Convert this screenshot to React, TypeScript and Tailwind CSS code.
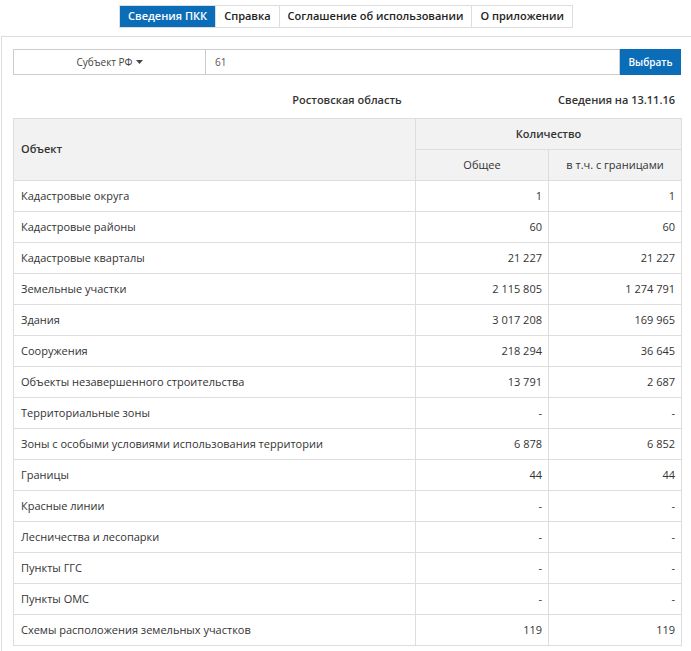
import React from "react"

const tabs = [
  { label: "Сведения ПКК", active: true },
  { label: "Справка" },
  { label: "Соглашение об использовании" },
  { label: "О приложении" },
]

const rows: [string, string, string][] = [
  ["Кадастровые округа", "1", "1"],
  ["Кадастровые районы", "60", "60"],
  ["Кадастровые кварталы", "21 227", "21 227"],
  ["Земельные участки", "2 115 805", "1 274 791"],
  ["Здания", "3 017 208", "169 965"],
  ["Сооружения", "218 294", "36 645"],
  ["Объекты незавершенного строительства", "13 791", "2 687"],
  ["Территориальные зоны", "-", "-"],
  ["Зоны с особыми условиями использования территории", "6 878", "6 852"],
  ["Границы", "44", "44"],
  ["Красные линии", "-", "-"],
  ["Лесничества и лесопарки", "-", "-"],
  ["Пункты ГГС", "-", "-"],
  ["Пункты ОМС", "-", "-"],
  ["Схемы расположения земельных участков", "119", "119"],
]

export default function App() {
  return (
    <div className="w-[691px] h-[651px] bg-white overflow-hidden text-[#333] text-[11px] font-['Open_Sans',sans-serif]">
      {/* Tabs */}
      <div className="flex justify-center pt-[5px] pl-[1px]">
        <div className="flex h-[23px] border border-[#ddd]">
          {tabs.map((t) => (
            <div
              key={t.label}
              className={
                t.active
                  ? "px-[8px] flex items-center bg-[#0b6db7] text-white font-semibold"
                  : "px-[8px] flex items-center border-l border-[#ddd] font-semibold text-[#222]"
              }
            >
              {t.label}
            </div>
          ))}
        </div>
      </div>

      {/* Panel */}
      <div className="mt-[8px] ml-[1px] border-t border-l border-[#ddd] pl-[11px] pr-[10px] pt-[12px] h-[620px]">
        <div className="flex h-[26px]">
          <div className="w-[193px] border border-[#ccc] flex items-center justify-center text-[10px] text-[#444]">
            Субъект РФ
            <svg width="7" height="4" viewBox="0 0 7 4" className="ml-[3px]">
              <path d="M0 0h7L3.5 4z" fill="#444" />
            </svg>
          </div>
          <div className="flex-1 border border-l-0 border-[#ccc] flex items-center pl-[9px] text-[10px] text-[#555]">
            61
          </div>
          <div className="w-[61px] bg-[#0b6db7] text-white flex items-center justify-center text-[10px] font-semibold">
            Выбрать
          </div>
        </div>

        <div className="grid grid-cols-[1fr_auto_1fr] h-[43px] items-center pt-[8px] font-semibold">
          <div />
          <div className="text-center">Ростовская область</div>
          <div className="text-right pr-[6px]">Сведения на 13.11.16</div>
        </div>

        <table className="w-[668px] border-collapse table-fixed">
          <colgroup>
            <col className="w-[402px]" />
            <col className="w-[133px]" />
            <col className="w-[133px]" />
          </colgroup>
          <thead>
            <tr className="h-[31px] bg-[#f2f2f2]">
              <th rowSpan={2} className="border border-[#ddd] text-left font-semibold px-[7px]">
                Объект
              </th>
              <th colSpan={2} className="border border-[#ddd] font-semibold">
                Количество
              </th>
            </tr>
            <tr className="h-[31px] bg-[#f2f2f2]">
              <th className="border border-[#ddd] font-normal">Общее</th>
              <th className="border border-[#ddd] font-normal">в т.ч. с границами</th>
            </tr>
          </thead>
          <tbody>
            {rows.map((r) => (
              <tr key={r[0]} className="h-[31px]">
                <td className="border border-[#ddd] px-[7px]">{r[0]}</td>
                <td className="border border-[#ddd] px-[6px] text-right">{r[1]}</td>
                <td className="border border-[#ddd] px-[6px] text-right">{r[2]}</td>
              </tr>
            ))}
          </tbody>
        </table>
      </div>
    </div>
  )
}
